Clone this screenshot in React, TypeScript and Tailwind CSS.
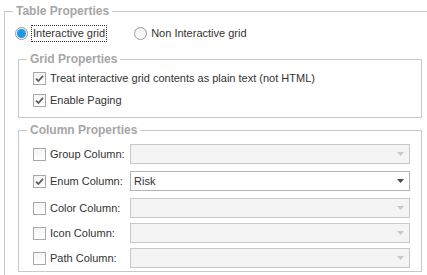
import React from "react"

const FONT = "font-['Tahoma','Liberation_Sans',sans-serif]"

function Check({ checked }: { checked?: boolean }) {
  return (
    <span className="w-[13px] h-[13px] border border-[#a9a9a9] bg-gradient-to-b from-[#f4f4f4] to-[#ffffff] flex items-center justify-center shrink-0">
      {checked && (
        <svg width="11" height="11" viewBox="0 0 11 11">
          <path d="M2 5.6 L4.4 8 L9 2.8" fill="none" stroke="#5f5f5f" strokeWidth="1.8" />
        </svg>
      )}
    </span>
  )
}

function Radio({ checked }: { checked?: boolean }) {
  return (
    <span className="w-[13px] h-[13px] rounded-full border border-[#9a9a9a] bg-gradient-to-b from-[#f0f0f0] to-[#ffffff] flex items-center justify-center shrink-0">
      {checked && <span className="w-[9px] h-[9px] rounded-full bg-[#1a9be8]" />}
    </span>
  )
}

function Combo({ value, disabled }: { value?: string; disabled?: boolean }) {
  return (
    <div
      className={`w-[280px] h-[20px] border flex items-center justify-between pl-[3px] pr-[5px] ${
        disabled ? "border-[#c8c8c8] bg-[#f4f4f4]" : "border-[#b4b4b4] bg-white"
      }`}
    >
      <span className="text-[11px] text-[#333]">{value}</span>
      <svg width="7" height="4" viewBox="0 0 7 4">
        <path d="M0 0 H7 L3.5 4 Z" fill={disabled ? "#c9c9c9" : "#4a4a4a"} />
      </svg>
    </div>
  )
}

function Legend({ children }: { children: React.ReactNode }) {
  return (
    <legend className="ml-[8px] px-[3px] text-[12px] font-bold text-[#a6a6a6] leading-[16px]">{children}</legend>
  )
}

const COLUMNS = [
  { label: "Group Column:", mt: "mt-[6px]" },
  { label: "Enum Column:", checked: true, value: "Risk", mt: "mt-[7px]" },
  { label: "Color Column:", mt: "mt-[7px]" },
  { label: "Icon Column:", mt: "mt-[5px]" },
  { label: "Path Column:", mt: "mt-[5px]" },
]

export default function App() {
  return (
    <div className={`w-[427px] h-[275px] bg-white overflow-hidden text-[#333] ${FONT}`}>
      <fieldset className="ml-[4px] mt-[3px] w-[440px] h-[300px] border-t border-l border-[#c8c8c8]">
        <Legend>Table Properties</Legend>

        {/* radio row */}
        <div className="flex items-center h-[17px] mt-[6px] text-[11px]">
          <div className="ml-[10px] flex items-center gap-[3px]">
            <Radio checked />
            <span className="border border-dotted border-[#333] px-[1px] leading-[15px]">Interactive grid</span>
          </div>
          <div className="ml-[27px] flex items-center gap-[4px]">
            <Radio />
            <span>Non Interactive grid</span>
          </div>
        </div>

        {/* Grid Properties */}
        <fieldset className="ml-[13px] mt-[9px] w-[404px] h-[67px] border border-[#c8c8c8]">
          <Legend>Grid Properties</Legend>
          <div className="ml-[14px] mt-[5px] flex flex-col gap-[9px] text-[11px]">
            <label className="flex items-center gap-[4px] h-[13px]">
              <Check checked />
              <span>Treat interactive grid contents as plain text (not HTML)</span>
            </label>
            <label className="flex items-center gap-[4px] h-[13px]">
              <Check checked />
              <span>Enable Paging</span>
            </label>
          </div>
        </fieldset>

        {/* Column Properties */}
        <fieldset className="ml-[13px] mt-[4px] w-[404px] h-[150px] border border-[#c8c8c8]">
          <Legend>Column Properties</Legend>
          <div className="flex flex-col text-[11px]">
            {COLUMNS.map((c) => (
              <div key={c.label} className={`flex items-center ${c.mt}`}>
                <label className="ml-[14px] w-[97px] flex items-center gap-[4px]">
                  <Check checked={c.checked} />
                  <span>{c.label}</span>
                </label>
                <Combo value={c.value} disabled={!c.checked} />
              </div>
            ))}
          </div>
        </fieldset>
      </fieldset>
    </div>
  )
}
